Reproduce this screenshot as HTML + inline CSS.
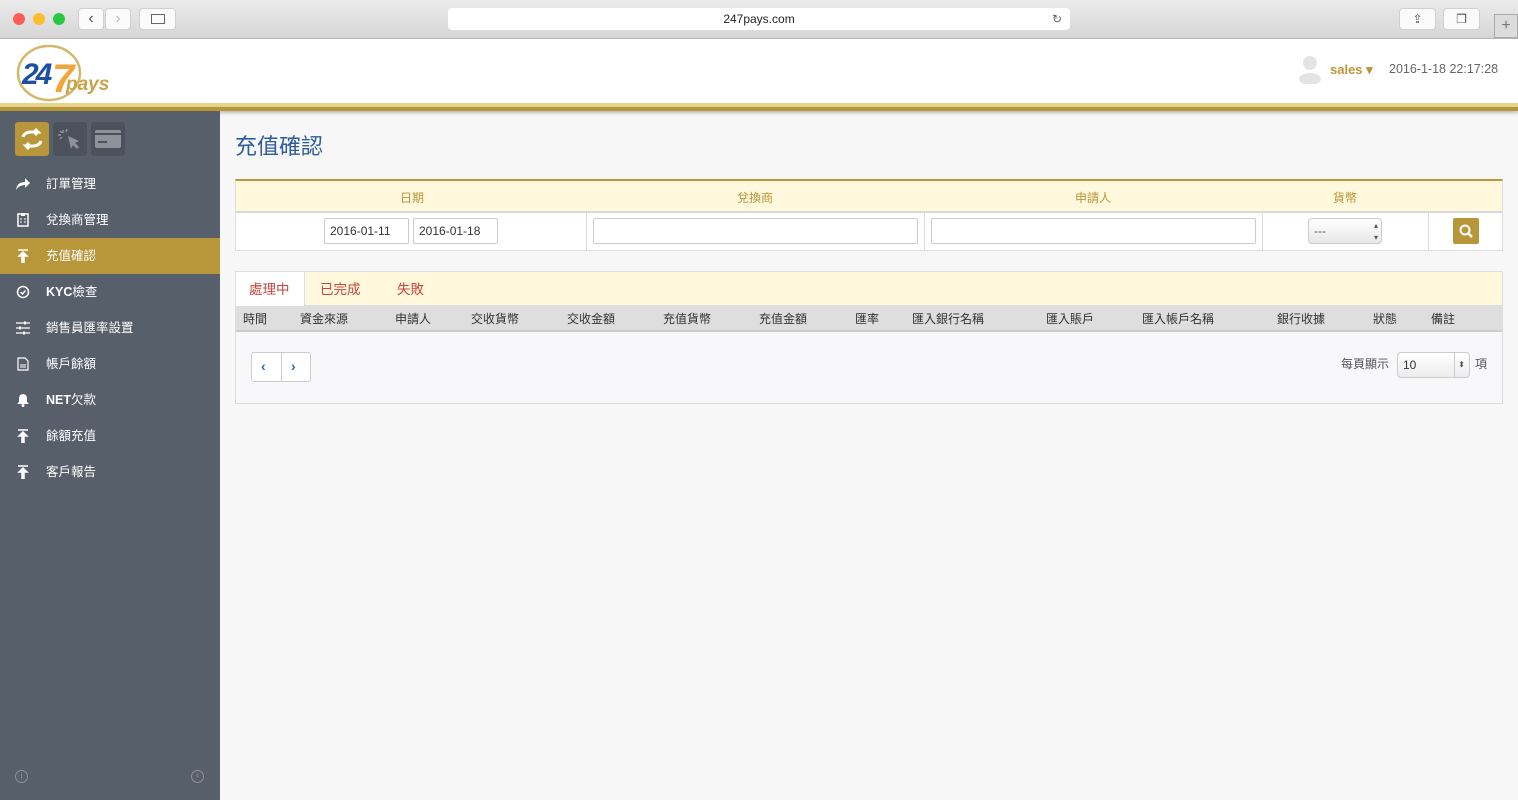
<!DOCTYPE html>
<html><head><meta charset="utf-8"><style>
*{box-sizing:border-box;margin:0;padding:0}
body{width:1518px;height:800px;overflow:hidden;font-family:"Liberation Sans","Noto Sans CJK TC",sans-serif;font-size:12px;color:#333;background:#f7f7f7;position:relative}
.chrome{position:absolute;left:0;top:0;width:1518px;height:39px;background:linear-gradient(#ebebeb,#d6d6d6);border-bottom:1px solid #b5b5b5}
.dot{position:absolute;top:13px;width:12px;height:12px;border-radius:50%}
.btn{position:absolute;top:8px;height:22px;background:#fbfbfb;border-radius:4px;border:1px solid #d0d0d0}
.url{position:absolute;left:448px;top:8px;width:622px;height:22px;background:#fff;border-radius:4px;text-align:center;line-height:22px;font-size:12px;color:#222}
.hdr{position:absolute;left:0;top:39px;width:1518px;height:64px;background:#fff}
.stripe1{position:absolute;left:0;top:103px;width:1518px;height:4px;background:#e8d48a}
.stripe2{position:absolute;left:0;top:107px;width:1518px;height:4px;background:#b8963a;box-shadow:0 2px 3px rgba(0,0,0,.25)}
.side{position:absolute;left:0;top:111px;width:220px;height:689px;background:#575f6b}
.ic{position:absolute;top:11px;width:34px;height:34px;border-radius:3px;background:#4b525c}
.nav{position:absolute;left:0;width:220px;height:36px;color:#fff;font-size:12.5px;line-height:36px;padding-left:46px}
.nav svg{position:absolute;left:15px;top:11px}
.nav.act{background:#b8963a}
h1{position:absolute;left:235px;top:129px;font-size:22px;font-weight:normal;color:#2e5b9a}
.fp{position:absolute;left:235px;top:179px;width:1268px;height:72px;background:#fff;border:1px solid #ddd;border-top:2px solid #b8963a}
.fh{height:32px;background:#fff8dc;border-bottom:2px solid #d8d8d8;position:relative}
.fh span{position:absolute;top:8px;color:#b8963a;font-size:12px;transform:translateX(-50%)}
.fr{position:relative;height:38px}
.vl{position:absolute;top:0;height:38px;border-left:1px solid #ddd}
.inp{position:absolute;top:5px;height:26px;border:1px solid #ccc;border-radius:2px;background:#fff;font-size:12px;line-height:24px;padding-left:5px}
.tp{position:absolute;left:235px;top:271px;width:1268px;height:133px;border:1px solid #ddd;background:#f8f8fa}
.tabs{height:34px;background:#fff8dc;border-bottom:1px solid #ddd;position:relative}
.tab{position:absolute;top:6px;color:#c9453e;font-size:13.5px}
.th{height:26px;background:#dedede;border-bottom:2px solid #ccc;position:relative}
.th span{position:absolute;top:4px;font-size:12px;color:#333}
</style></head><body>
<div class="chrome">
<div class="dot" style="left:13px;background:#fc5f57"></div>
<div class="dot" style="left:33px;background:#fdbc2e"></div>
<div class="dot" style="left:53px;background:#28c840"></div>
<div class="btn" style="left:78px;width:26px;text-align:center;line-height:19px;font-size:16px;color:#555">‹</div>
<div class="btn" style="left:105px;width:26px;text-align:center;line-height:19px;font-size:16px;color:#bbb">›</div>
<div class="btn" style="left:139px;width:37px"><div style="margin:5px auto;width:14px;height:10px;border:1px solid #666"></div></div>
<div class="url">247pays.com<span style="position:absolute;right:8px;color:#666">↻</span></div>
<div class="btn" style="left:1399px;width:37px;text-align:center;color:#555;line-height:20px">⇪</div>
<div class="btn" style="left:1443px;width:37px;text-align:center;color:#555;line-height:20px">❐</div>
<div style="position:absolute;left:1494px;top:14px;width:24px;height:24px;border:1px solid #aaa;background:#dcdcdc;text-align:center;line-height:22px;font-size:16px;color:#777">+</div>
</div>
<div class="hdr">
<svg style="position:absolute;left:14px;top:3px" width="100" height="60"><ellipse cx="35" cy="31" rx="31" ry="27" fill="none" stroke="#d4b86a" stroke-width="2.5"/><text x="8" y="42" font-family="Liberation Sans" font-weight="bold" font-style="italic" font-size="30" fill="#1f4ea3" letter-spacing="-3">24</text><text x="38" y="50" font-family="Liberation Sans" font-weight="bold" font-style="italic" font-size="40" fill="#f3a53a">7</text><text x="52" y="48" font-family="Liberation Sans" font-weight="bold" font-style="italic" font-size="19" fill="#c9a24a">pays</text></svg>
<svg style="position:absolute;left:1298px;top:15px" width="24" height="30"><circle cx="12" cy="9" r="7" fill="#e4e4e4"/><ellipse cx="12" cy="25" rx="11" ry="6" fill="#e4e4e4"/></svg>
<span style="position:absolute;left:1330px;top:23px;color:#b8963a;font-weight:bold;font-size:13px">sales ▾</span>
<span style="position:absolute;left:1389px;top:23px;color:#666;font-size:12.5px">2016-1-18 22:17:28</span>
</div>
<div class="stripe1"></div><div class="stripe2"></div>
<div class="side">
<div class="ic" style="left:15px;background:#b8963a"><svg width="34" height="34"><path d="M8 15 a8 6 0 0 1 8-5 h7 l-3-3 M23 10 l-3 3 M26 19 a8 6 0 0 1-8 5 h-7 l3 3 M11 24 l3-3" fill="none" stroke="#fff" stroke-width="3"/></svg></div>
<div class="ic" style="left:53px"><svg width="34" height="34"><path d="M15 14 l11 5 -4 2 4 4 -2 2 -4-4 -2 4z" fill="#8d939b"/><path d="M10 8v3M5 13h3M7 9l2 2M14 7l-1 3M7 17l2-2" stroke="#8d939b" stroke-width="1.5"/></svg></div>
<div class="ic" style="left:91px"><svg width="34" height="34"><rect x="4" y="8" width="26" height="18" rx="2" fill="#8d939b"/><rect x="4" y="11" width="26" height="2" fill="#4b525c"/><rect x="7" y="19" width="9" height="2" fill="#4b525c"/></svg></div>
<div class="nav" style="top:55px"><svg width="16" height="14"><path d="M1 13 q1-8 9-8 v-4 l5 5 -5 5 v-3 q-6 0-9 5z" fill="#fff"/></svg>訂單管理</div>
<div class="nav" style="top:91px"><svg width="16" height="14"><rect x="3" y="1" width="10" height="12" fill="none" stroke="#fff" stroke-width="1.5"/><rect x="6" y="0" width="4" height="3" fill="#fff"/><path d="M5 6h2M9 6h2M5 9h2M9 9h2" stroke="#fff"/></svg>兌換商管理</div>
<div class="nav act" style="top:127px"><svg width="16" height="14"><path d="M3 1h10M8 3 l-4 4h3v7h2v-7h3z" stroke="#fff" fill="#fff" stroke-width="1.5"/></svg>充值確認</div>
<div class="nav" style="top:163px"><svg width="16" height="14"><circle cx="8" cy="7" r="5.5" fill="none" stroke="#fff" stroke-width="1.5"/><path d="M5.5 7l2 2 3-3.5" fill="none" stroke="#fff" stroke-width="1.5"/></svg><b>KYC</b>檢查</div>
<div class="nav" style="top:199px"><svg width="16" height="14"><path d="M1 2h14M1 7h14M1 12h14" stroke="#fff" stroke-width="1.2"/><rect x="9" y="0.5" width="2" height="3" fill="#fff"/><rect x="4" y="5.5" width="2" height="3" fill="#fff"/><rect x="8" y="10.5" width="2" height="3" fill="#fff"/></svg>銷售員匯率設置</div>
<div class="nav" style="top:235px"><svg width="16" height="14"><path d="M3 1h7l3 3v9h-10z" fill="none" stroke="#fff" stroke-width="1.2"/><path d="M5 8h6M5 10h6" stroke="#fff"/></svg>帳戶餘額</div>
<div class="nav" style="top:271px"><svg width="16" height="14"><path d="M8 1 q-4 0-4 5 v3 l-2 2 h12 l-2-2 v-3 q0-5-4-5z" fill="#fff"/><circle cx="8" cy="12.5" r="1.5" fill="#fff"/></svg><b>NET</b>欠款</div>
<div class="nav" style="top:307px"><svg width="16" height="14"><path d="M3 1h10M8 3 l-4 4h3v7h2v-7h3z" stroke="#fff" fill="#fff" stroke-width="1.5"/></svg>餘額充值</div>
<div class="nav" style="top:343px"><svg width="16" height="14"><path d="M3 1h10M8 3 l-4 4h3v7h2v-7h3z" stroke="#fff" fill="#fff" stroke-width="1.5"/></svg>客戶報告</div>
<div style="position:absolute;left:15px;top:659px;width:13px;height:13px;border:1px solid #8d939b;border-radius:50%;color:#8d939b;font-size:9px;text-align:center;line-height:11px">i</div>
<div style="position:absolute;left:191px;top:659px;width:13px;height:13px;border:1px solid #8d939b;border-radius:50%;color:#8d939b;font-size:10px;text-align:center;line-height:10px">‹</div>
</div>
<h1>充值確認</h1>
<div class="fp">
<div class="fh"><span style="left:176px">日期</span><span style="left:519px">兌換商</span><span style="left:857px">申請人</span><span style="left:1109px">貨幣</span></div>
<div class="fr">
<div class="vl" style="left:350px"></div><div class="vl" style="left:688px"></div><div class="vl" style="left:1026px"></div><div class="vl" style="left:1192px"></div>
<div class="inp" style="left:88px;width:85px">2016-01-11</div>
<div class="inp" style="left:177px;width:85px">2016-01-18</div>
<div class="inp" style="left:357px;width:325px"></div>
<div class="inp" style="left:695px;width:325px"></div>
<div class="inp" style="left:1072px;width:74px;background:linear-gradient(#fff,#e8e8e8);border-radius:4px;color:#555">---<span style="position:absolute;right:3px;top:0;font-size:8px;line-height:12px;padding-top:1px">▴<br>▾</span></div>
<div style="position:absolute;left:1217px;top:5px;width:26px;height:26px;background:#b8963a;border-radius:2px"><svg width="26" height="26"><circle cx="12" cy="12" r="4.5" fill="none" stroke="#fff" stroke-width="2"/><line x1="15" y1="15" x2="19" y2="19" stroke="#fff" stroke-width="2.5"/></svg></div>
</div></div>
<div class="tp">
<div class="tabs">
<div style="position:absolute;left:0;top:0;width:69px;height:34px;background:#fff;border-right:1px solid #ddd"></div>
<span class="tab" style="left:13px">處理中</span><span class="tab" style="left:84px">已完成</span><span class="tab" style="left:161px">失敗</span></div>
<div class="th"><span style="left:7px">時間</span><span style="left:64px">資金來源</span><span style="left:159px">申請人</span><span style="left:235px">交收貨幣</span><span style="left:331px">交收金額</span><span style="left:427px">充值貨幣</span><span style="left:523px">充值金額</span><span style="left:619px">匯率</span><span style="left:676px">匯入銀行名稱</span><span style="left:810px">匯入賬戶</span><span style="left:906px">匯入帳戶名稱</span><span style="left:1041px">銀行收據</span><span style="left:1137px">狀態</span><span style="left:1195px">備註</span></div>
<div style="position:absolute;left:15px;top:80px;width:60px;height:30px;border:1px solid #ccc;border-radius:3px;background:#fff"><div style="position:absolute;left:29px;top:0;height:28px;border-left:1px solid #ccc"></div><span style="position:absolute;left:9px;top:5px;color:#2e6da4;font-weight:bold;font-size:14px">‹</span><span style="position:absolute;left:39px;top:5px;color:#2e6da4;font-weight:bold;font-size:14px">›</span></div>
<span style="position:absolute;left:1105px;top:83px;color:#555">每頁顯示</span>
<div class="inp" style="left:1161px;top:80px;width:73px;height:26px;border-radius:4px;background:linear-gradient(#fff,#ececec)">10<span style="position:absolute;right:4px;top:0;font-size:8px;color:#555;border-left:1px solid #ccc;padding-left:3px">⬍</span></div>
<span style="position:absolute;left:1239px;top:83px;color:#555">項</span>
</div>
</body></html>
